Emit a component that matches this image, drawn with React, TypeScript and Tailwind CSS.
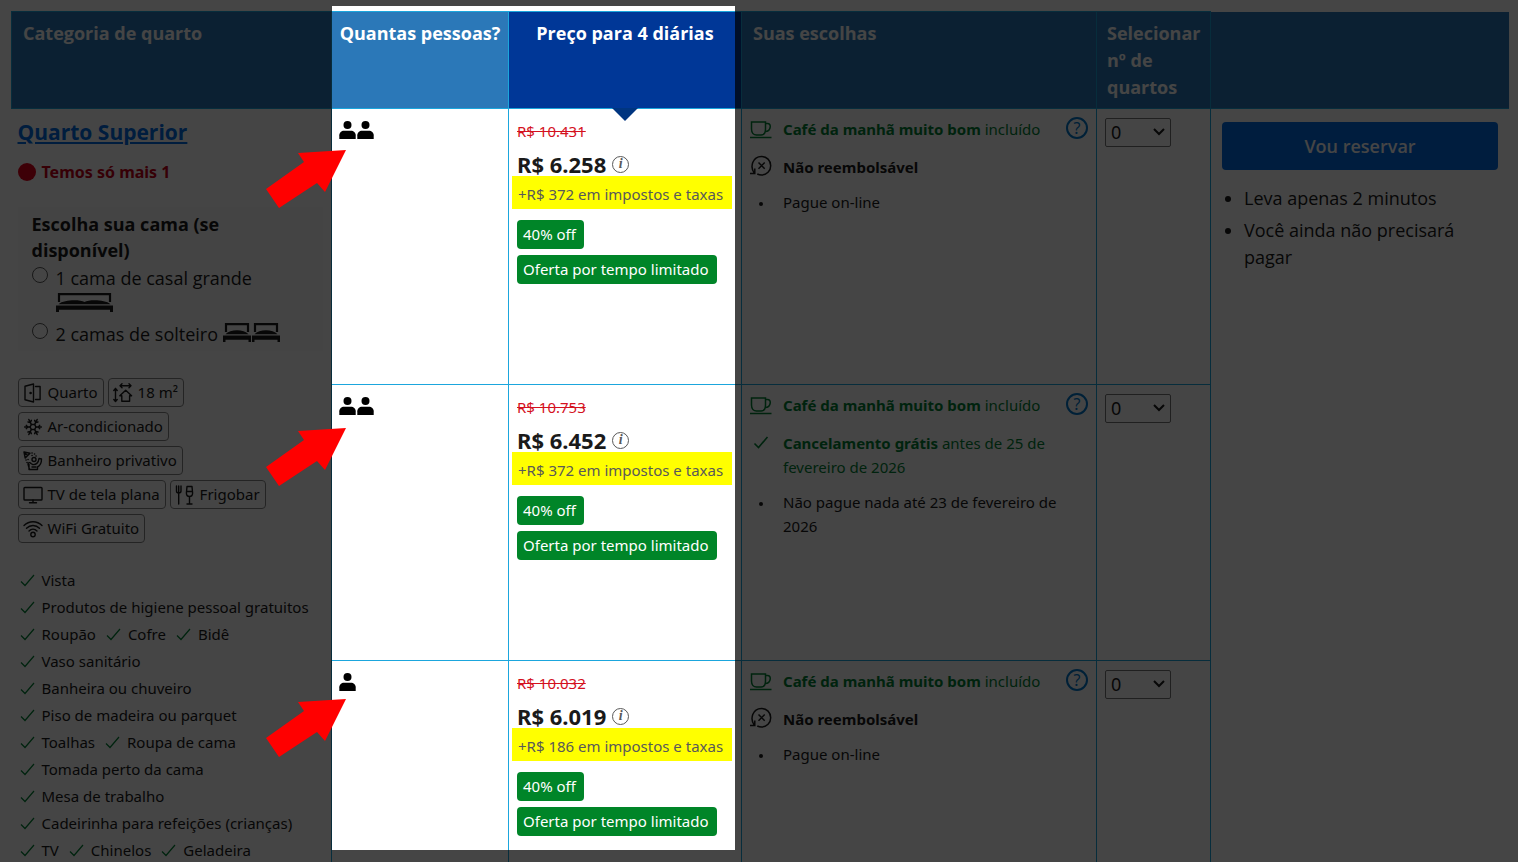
import type { ReactNode } from 'react';
import { Snowflake } from 'lucide-react';

type Offer = {
  id: string;
  guests: number;
  oldPrice: string;
  price: string;
  taxes: string;
  freeCancel: boolean;
  payment: string;
  arrowTop: string;
};

const offers: Offer[] = [
  {
    id: "o1",
    guests: 2,
    oldPrice: "R$ 10.431",
    price: "R$ 6.258",
    taxes: "+R$ 372 em impostos e taxas",
    freeCancel: false,
    payment: "Pague on-line",
    arrowTop: "top-[41px]",
  },
  {
    id: "o2",
    guests: 2,
    oldPrice: "R$ 10.753",
    price: "R$ 6.452",
    taxes: "+R$ 372 em impostos e taxas",
    freeCancel: true,
    payment: "Não pague nada até 23 de fevereiro de 2026",
    arrowTop: "top-[43px]",
  },
  {
    id: "o3",
    guests: 1,
    oldPrice: "R$ 10.032",
    price: "R$ 6.019",
    taxes: "+R$ 186 em impostos e taxas",
    freeCancel: false,
    payment: "Pague on-line",
    arrowTop: "top-[38px]",
  },
];

const facilities = [
  ["Vista"],
  ["Produtos de higiene pessoal gratuitos"],
  ["Roupão", "Cofre", "Bidê"],
  ["Vaso sanitário"],
  ["Banheira ou chuveiro"],
  ["Piso de madeira ou parquet"],
  ["Toalhas", "Roupa de cama"],
  ["Tomada perto da cama"],
  ["Mesa de trabalho"],
  ["Cadeirinha para refeições (crianças)"],
  ["TV", "Chinelos", "Geladeira"],
];

function LineIcon({ children }: { children: ReactNode }) {
  return (
    <svg width="20" height="20" viewBox="0 0 20 20" fill="none" stroke="currentColor" strokeWidth="1.4" strokeLinecap="round" strokeLinejoin="round" aria-hidden="true">
      {children}
    </svg>
  );
}

const chips = [
  {
    label: "Quarto",
    icon: (
      <LineIcon>
        <path d="M2 3.2 10.5 1v18L2 16.8zM12.5 3.5h4.6v13h-4.6" />
        <circle cx="7.6" cy="10" r=".6" fill="currentColor" />
      </LineIcon>
    ),
  },
  {
    label: "18 m²",
    icon: (
      <LineIcon>
        <path d="M7 2.8h11M9 .8l-2 2 2 2M16 .8l2 2-2 2M2.5 5.5v13M.8 7.5l1.7-2 1.7 2M.8 16.5l1.7 2 1.7-2" />
        <path d="M6.8 12.8 12.7 7.2l5.9 5.6h-2v5.5H8.8v-5.5z" />
      </LineIcon>
    ),
  },
  { label: "Ar-condicionado", icon: <Snowflake size={20} strokeWidth={1.8} aria-hidden="true" /> },
  {
    label: "Banheiro privativo",
    icon: (
      <LineIcon>
        <path d="M1 1l6 1.2L2.2 7zM1 1l3.5 3.5" />
        <path d="M9 2h.1M11.5 3h.1M13 5h.1M3 9h.1M4 11.5h.1M9 4.500h.1M5 8.5h.1" strokeWidth="1.6" />
        <circle cx="11" cy="8.5" r="2" />
        <path d="M5 13c0-1.5 2-2 3-.5l1.5 1c3.5.5 6-1.5 6.5-6l2.5.5c0 4.5-2 7-4 8v2.5H6.5L5.5 15zM6 13.5v5M9 16h4" />
      </LineIcon>
    ),
  },
  {
    label: "TV de tela plana",
    icon: (
      <LineIcon>
        <rect x="1" y="2.5" width="18" height="12.5" rx=".8" />
        <path d="M10 15v2.5M6.5 17.8h7" />
      </LineIcon>
    ),
  },
  {
    label: "Frigobar",
    icon: (
      <LineIcon>
        <path d="M1.5 1v5c0 1.3 1 2 2.2 2S6 7.3 6 6V1M3.7 1v18M12 1.5h5l.6 6.5c0 2.4-1.4 3.5-3.1 3.5S11.4 10.4 11.4 8zM11.6 6.5h5.800M14.5 11.5V19M12 19h5" />
      </LineIcon>
    ),
  },
  {
    label: "WiFi Gratuito",
    icon: (
      <LineIcon>
        <path d="M1 6.5c5-5 13-5 18 0M3.5 9.2c3.6-3.7 9.4-3.7 13 0M6 12c2.3-2.3 5.7-2.3 8 0" />
        <circle cx="10" cy="15.5" r="2.2" />
      </LineIcon>
    ),
  },
];

function Check({ className, stroke = 1.2 }: { className: string; stroke?: number }) {
  return (
    <svg viewBox="0 0 15 13" className={className} fill="none" stroke="currentColor" strokeWidth={stroke} aria-hidden="true">
      <path d="M1 7.5l4 4L14 1" />
    </svg>
  );
}

function Person() {
  return (
    <svg width="17" height="18" viewBox="0 0 17 18" fill="currentColor" aria-hidden="true">
      <circle cx="8.5" cy="4" r="4" />
      <path d="M.3 18v-3.7C.3 11.8 2.5 9.8 5 9.8h7c2.5 0 4.700 2 4.700 4.5V18z" />
    </svg>
  );
}

function DoubleBed() {
  return (
    <svg width="57" height="19" viewBox="0 0 57 19" aria-hidden="true">
      <path d="M3 9V1.2h51V9" fill="none" stroke="currentColor" strokeWidth="2.2" />
      <path d="M2.5 11.2C8 6.5 24 6.5 28.5 9 33 6.5 49 6.5 54.5 11.2zM0 12.5h57V19h-3v-2.2H3V19H0z" fill="currentColor" />
    </svg>
  );
}

function SingleBed() {
  return (
    <svg width="28" height="19" viewBox="0 0 28 19" aria-hidden="true">
      <path d="M3 9V1.2h22V9" fill="none" stroke="currentColor" strokeWidth="2.2" />
      <path d="M2.5 11.2C7 6 21 6 25.5 11.2zM0 12.5h28V19h-2.5v-2.2h-23V19H0z" fill="currentColor" />
    </svg>
  );
}

function Cup() {
  return (
    <svg width="22" height="18" viewBox="0 0 22 18" fill="none" stroke="currentColor" strokeWidth="1.5" aria-hidden="true">
      <path d="M1.5 1h14v7c0 4-2 6-4.5 6H6.5c-2.8 0-5-2-5-6zM15.5 2.5h2c2 0 3 1.5 2.7 3.7-.3 2.6-2 4.3-5 4.3M0 16.5h21.5" />
    </svg>
  );
}

function NoRefund() {
  return (
    <svg width="22" height="22" viewBox="0 0 22 22" fill="none" stroke="currentColor" strokeWidth="1.5" aria-hidden="true">
      <path d="M4.5 18.5C-.5 12 2.5 1.5 11.5 1.5c5.2 0 9.2 4 9.2 9.2s-4 9.3-9.2 9.3c-1.6 0-3-.4-4.2-1M0 18.5h4.8v-5M8.5 7.5l6.2 6.2M14.7 7.5l-6.2 6.2" />
    </svg>
  );
}

function Arrow({ className }: { className: string }) {
  return (
    <svg width="80" height="58" viewBox="0 0 80 58" fill="#ff0000" className={className} aria-hidden="true">
      <path d="M80 0 32 3l6 9L0 39l13 19 38-25 8 9z" />
    </svg>
  );
}

function PriceCell({ offer }: { offer: Offer }) {
  return (
    <td className="border border-[#1ba6dd] p-0 align-top">
      <div className="px-2 pt-2.5 leading-6">
        <s className="text-[15px] text-[#d4111e]">{offer.oldPrice}</s>
      </div>
      <div className="mt-[9px] flex items-center gap-1.5 px-2 leading-6">
        <span className="text-[22px] font-bold">{offer.price}</span>
        <button type="button" aria-label="Detalhes do preço" className="size-[17px] rounded-full border border-[#595959] font-['Liberation_Serif',serif] text-[14px] leading-[14px] font-bold text-[#595959] italic">
          i
        </button>
      </div>
      <p className="mr-[9px] ml-[3px] bg-[#ffff00] pt-1.5 pb-[3px] pl-1.5 text-[15px] leading-6 whitespace-nowrap text-[#595959]">{offer.taxes}</p>
      <div className="mt-[11px] flex flex-col items-start gap-1.5 px-2 text-[15px] leading-[29px] text-white">
        <span className="rounded-[4px] bg-[#008528] pr-2 pl-1.5">40% off</span>
        <span className="rounded-[4px] bg-[#008528] pr-2 pl-1.5 whitespace-nowrap">Oferta por tempo limitado</span>
      </div>
    </td>
  );
}

function ChoicesCell({ offer }: { offer: Offer }) {
  return (
    <td className="border border-[#1ba6dd] px-2 pt-2 align-top text-[15px] leading-6">
      <ul>
        <li className="flex gap-[11px] text-[#008234]">
          <span className="mt-1 w-[22px] shrink-0"><Cup /></span>
          <span className="grow whitespace-nowrap"><strong>Café da manhã muito bom</strong> incluído</span>
          <button type="button" aria-label="Sobre o café da manhã" className="size-[22px] rounded-full border-2 border-[#0077cc] text-[16px] leading-[18px] text-[#0077cc]">
            ?
          </button>
        </li>
        {offer.freeCancel ? (
          <li className="mt-3.5 flex gap-[11px] text-[#008234]">
            <span className="mt-[5px] w-[22px] shrink-0 pl-[3px]"><Check stroke={1.6} className="h-[13px] w-4" /></span>
            <span><strong>Cancelamento grátis</strong> antes de 25 de fevereiro de 2026</span>
          </li>
        ) : (
          <li className="mt-3.5 flex gap-[11px]">
            <span className="w-[22px] shrink-0"><NoRefund /></span>
            <strong>Não reembolsável</strong>
          </li>
        )}
        <li className="mt-[11px] flex gap-[11px]">
          <span className="flex h-7 w-[22px] shrink-0 items-center justify-center">
            <span className="size-1 rounded-full bg-current" />
          </span>
          <span>{offer.payment}</span>
        </li>
      </ul>
    </td>
  );
}

function QuantityCell({ offer }: { offer: Offer }) {
  return (
    <td className="border border-[#1ba6dd] pt-[9px] pl-2 align-top">
      <div className="relative w-[66px]">
        <select aria-label={`Selecionar nº de quartos, ${offer.price}`} defaultValue="0" className="block h-[29px] w-full appearance-none rounded-[2px] border border-[#767676] bg-white pl-[5px] text-[18px] leading-[27px]">
          <option>0</option>
          <option>1</option>
        </select>
        <svg width="12" height="8" viewBox="0 0 12 8" fill="none" stroke="currentColor" strokeWidth="2" className="pointer-events-none absolute top-2.5 right-1.5" aria-hidden="true">
          <path d="M1 1l5 5 5-5" />
        </svg>
      </div>
    </td>
  );
}

function RoomCell() {
  return (
    <td rowSpan={3} className="border-r border-[#1ba6dd] pt-2 pr-2 pl-1.5 align-top">
      <a href="#quarto" className="font-['Open_Sans',sans-serif] text-[21px] leading-[30px] font-bold text-[#006ce4] underline decoration-2 underline-offset-2">Quarto Superior</a>
      <p className="mt-[13px] flex items-center gap-1.5 text-[16px] leading-6 font-bold text-[#c60018]">
        <span className="size-[18px] rounded-full bg-[#e2001a]" />
        Temos só mais 1
      </p>
      <div role="radiogroup" aria-labelledby="bed-title" className="mt-[23px] bg-[#fcfcfc] px-3.5 pt-1 pb-1 font-['Open_Sans',sans-serif] text-[18px] leading-[26px]">
        <p id="bed-title" className="font-bold">Escolha sua cama (se disponível)</p>
        <label className="mt-0.5 flex gap-2">
          <input type="radio" name="bed" className="mt-0.5 size-4 shrink-0 appearance-none rounded-full border border-[#595959] bg-white" />
          <span>
            1 cama de casal grande
            <span className="flex h-[30px] items-start pt-0.5"><DoubleBed /></span>
          </span>
        </label>
        <label className="flex gap-2">
          <input type="radio" name="bed" className="mt-0.5 size-4 shrink-0 appearance-none rounded-full border border-[#595959] bg-white" />
          <span className="flex items-start gap-[5px] whitespace-nowrap">
            2 camas de solteiro
            <span className="flex gap-px pt-0.5"><SingleBed /><SingleBed /></span>
          </span>
        </label>
      </div>
      <ul className="mt-[27px] flex flex-wrap gap-x-1 gap-y-[5px] text-[15px] leading-[27px]">
        {chips.map((chip) => (
          <li key={chip.label} className="flex items-center gap-[5px] rounded-[4px] border border-[#868686] pr-[5px] pl-1">
            {chip.icon}
            {chip.label}
          </li>
        ))}
      </ul>
      <ul className="mt-6 text-[15px] leading-[27px]">
        {facilities.map((line) => (
          <li key={line[0]} className="flex gap-2 whitespace-nowrap">
            {line.map((name) => (
              <span key={name} className="flex items-center gap-[7px]">
                <Check className="ml-0.5 h-[13px] w-[15px] text-[#008234]" />
                {name}
              </span>
            ))}
          </li>
        ))}
      </ul>
    </td>
  );
}

export default function App() {
  const head = "border border-[#1ba6dd] bg-[#2b78b8] pt-2 pb-[7px] align-top";

  return (
    <main className="relative h-screen overflow-hidden bg-white pt-[11px] pr-[9px] pl-[11px] font-['Noto_Sans',sans-serif] text-[#1a1a1a]">
      <table className="w-full table-fixed border-collapse">
        <colgroup>
          <col className="w-[320px]" />
          <col className="w-[177px]" />
          <col className="w-[233px]" />
          <col className="w-[355px]" />
          <col className="w-[114px]" />
          <col />
        </colgroup>
        <thead className="text-left font-['Open_Sans',sans-serif] text-[18px] leading-[27px] font-bold text-white">
          <tr>
            <th className={`${head} px-[11px]`}>Categoria de quarto</th>
            <th className={`${head} text-center whitespace-nowrap`}>Quantas pessoas?</th>
            <th className="relative border border-[#1ba6dd] bg-[#003797] pt-2 pb-[7px] text-center align-top">
              Preço para 4 diárias
              <svg width="26" height="13" viewBox="0 0 26 13" fill="#003580" className="absolute top-full left-1/2 -translate-x-1/2" aria-hidden="true">
                <path d="M0 0h26L13 13z" />
              </svg>
            </th>
            <th className={`${head} px-[11px]`}>Suas escolhas</th>
            <th className={`${head} pl-2.5`}>Selecionar nº de quartos</th>
            <th className="border-b border-[#1ba6dd] bg-[#2b78b8]" aria-label="Reserva" />
          </tr>
        </thead>
        <tbody>
          {offers.map((offer, i) => (
            <tr key={offer.id} className="h-[276px]">
              {i === 0 && <RoomCell />}
              <td className="relative border border-[#1ba6dd] pt-3 pl-[7px] align-top text-black">
                <div className="flex gap-px">
                  {Array.from({ length: offer.guests }, (_, n) => <Person key={n} />)}
                </div>
                <Arrow className={`absolute -left-[66px] z-20 ${offer.arrowTop}`} />
              </td>
              <PriceCell offer={offer} />
              <ChoicesCell offer={offer} />
              <QuantityCell offer={offer} />
              {i === 0 && (
                <td rowSpan={3} className="px-[11px] pt-[13px] align-top font-['Open_Sans',sans-serif] text-[18px] leading-[27px]">
                  <button type="button" className="h-12 w-full rounded-[4px] bg-[#006ce4] font-semibold text-white">Vou reservar</button>
                  <ul className="mt-[15px] list-disc space-y-[5px] pl-[22px]">
                    <li>Leva apenas 2 minutos</li>
                    <li>Você ainda não precisará pagar</li>
                  </ul>
                </td>
              )}
            </tr>
          ))}
        </tbody>
      </table>

      {/* Spotlight over the guests and price columns */}
      <div className="pointer-events-none absolute top-1.5 bottom-3 left-[332px] z-10 w-[403px] shadow-[0_0_0_9999px_rgba(0,0,0,0.73)]" />
    </main>
  );
}
